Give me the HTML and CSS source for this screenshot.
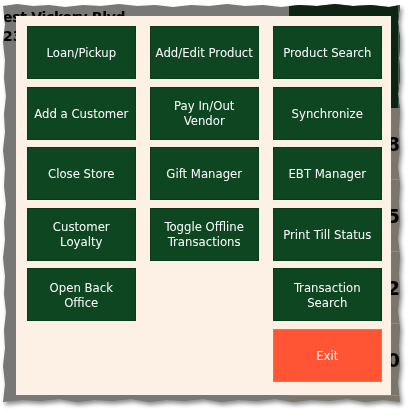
FILE: index.html
```html
<!DOCTYPE html>
<html>
<head>
<meta charset="utf-8">
<link rel="stylesheet" href="styles.css">
</head>
<body>
<div class="shot">
  <div class="frame">
    <div class="app">
      <div class="app-left">
        <div class="addr">est Vickery Blvd</div>
        <div class="addr2">23)</div>
      </div>
      <div class="app-right">
        <div class="right-top"></div>
        <div class="cell"><span>8</span></div>
        <div class="cell"><span>5</span></div>
        <div class="cell"><span>2</span></div>
        <div class="cell"><span>0</span></div>
      </div>
    </div>
    <div class="modal">
      <div class="grid">
        <button class="btn">Loan/Pickup</button>
        <button class="btn">Add/Edit Product</button>
        <button class="btn">Product Search</button>
        <button class="btn">Add a Customer</button>
        <button class="btn">Pay In/Out<br>Vendor</button>
        <button class="btn">Synchronize</button>
        <button class="btn">Close Store</button>
        <button class="btn">Gift Manager</button>
        <button class="btn">EBT Manager</button>
        <button class="btn">Customer<br>Loyalty</button>
        <button class="btn">Toggle Offline<br>Transactions</button>
        <button class="btn">Print Till Status</button>
        <button class="btn">Open Back<br>Office</button>
        <div class="empty"></div>
        <button class="btn">Transaction<br>Search</button>
        <div class="empty"></div>
        <div class="empty"></div>
        <button class="btn exit">Exit</button>
      </div>
    </div>
  </div>
</div>
</body>
</html>
```

FILE: styles.css
```css
html, body {
  margin: 0;
  padding: 0;
  background: #ffffff;
  width: 414px;
  height: 417px;
  overflow: hidden;
}

.shot {
  padding: 4px 0 0 3px;
  filter: drop-shadow(2px 3px 2px rgba(0, 0, 0, 0.45));
  width: 397px;
  height: 398px;
}

.frame {
  position: relative;
  width: 397px;
  height: 398px;
  overflow: hidden;
  clip-path: polygon(
    0px 2px, 14px 0px, 30px 2px, 46px 1px, 62px 3px, 80px 1px, 98px 2px, 116px 0px, 134px 2px,
    152px 1px, 170px 3px, 188px 1px, 206px 2px, 224px 0px, 242px 2px, 260px 1px, 278px 3px,
    296px 1px, 314px 2px, 332px 0px, 350px 2px, 368px 1px, 386px 3px, 397px 1px,
    395px 18px, 397px 36px, 396px 54px, 397px 72px, 395px 90px, 397px 108px, 396px 126px,
    397px 144px, 395px 162px, 397px 180px, 396px 198px, 397px 216px, 395px 234px, 397px 252px,
    396px 270px, 397px 288px, 395px 306px, 397px 324px, 396px 342px, 397px 360px, 395px 378px,
    397px 398px,
    380px 396px, 362px 398px, 344px 395px, 326px 397px, 308px 396px, 290px 398px, 272px 395px,
    254px 397px, 236px 396px, 218px 398px, 200px 395px, 182px 397px, 164px 396px, 146px 398px,
    128px 395px, 110px 397px, 92px 396px, 74px 398px, 56px 395px, 38px 397px, 20px 396px,
    0px 398px,
    2px 380px, 0px 362px, 2px 344px, 1px 326px, 3px 308px, 1px 290px, 2px 272px, 0px 254px,
    2px 236px, 1px 218px, 3px 200px, 1px 182px, 2px 164px, 0px 146px, 2px 128px, 1px 110px,
    3px 92px, 1px 74px, 2px 56px, 0px 38px, 2px 20px
  );
}

.app {
  display: grid;
  grid-template-columns: 286px 1fr;
  width: 100%;
  height: 100%;
  font-family: "DejaVu Sans", sans-serif;
}

.app-left {
  background: #787876;
  display: flex;
  flex-direction: column;
  color: #000;
  font-weight: bold;
}

.addr {
  font-size: 14px;
  line-height: 16px;
  margin-top: 5px;
  letter-spacing: -0.3px;
}

.addr2 {
  font-size: 14px;
  line-height: 16px;
  margin-top: 3px;
}

.app-right {
  background: #7b756c;
  display: grid;
  grid-template-rows: 104px repeat(4, 72px) 1fr;
}

.right-top {
  background: #0b2413;
  border-right: 2px solid #4a5a4e;
  box-sizing: border-box;
}

.cell {
  border-bottom: 1px solid #8d877e;
  display: flex;
  align-items: center;
  justify-content: flex-end;
  padding-right: 0px;
  font-weight: bold;
  font-size: 19px;
  color: #000;
}

.modal {
  position: absolute;
  left: 13px;
  top: 12px;
  width: 375px;
  height: 379px;
  background: #fdf1e6;
  box-sizing: border-box;
  padding: 10px 0 0 11px;
}

.grid {
  display: grid;
  grid-template-columns: repeat(3, 108.5px);
  grid-auto-rows: 53px;
  column-gap: 14.5px;
  row-gap: 7.6px;
}

.btn {
  margin: 0;
  border: 1px solid #0a3a1a;
  background: #0e4622;
  color: #ffffff;
  font-family: "DejaVu Sans Condensed", "DejaVu Sans", sans-serif;
  font-size: 13px;
  line-height: 15px;
  text-align: center;
  padding: 0 2px;
  display: flex;
  align-items: center;
  justify-content: center;
  cursor: pointer;
}

.exit {
  background: #ff5535;
  border-color: #ff6a4c;
}
```
